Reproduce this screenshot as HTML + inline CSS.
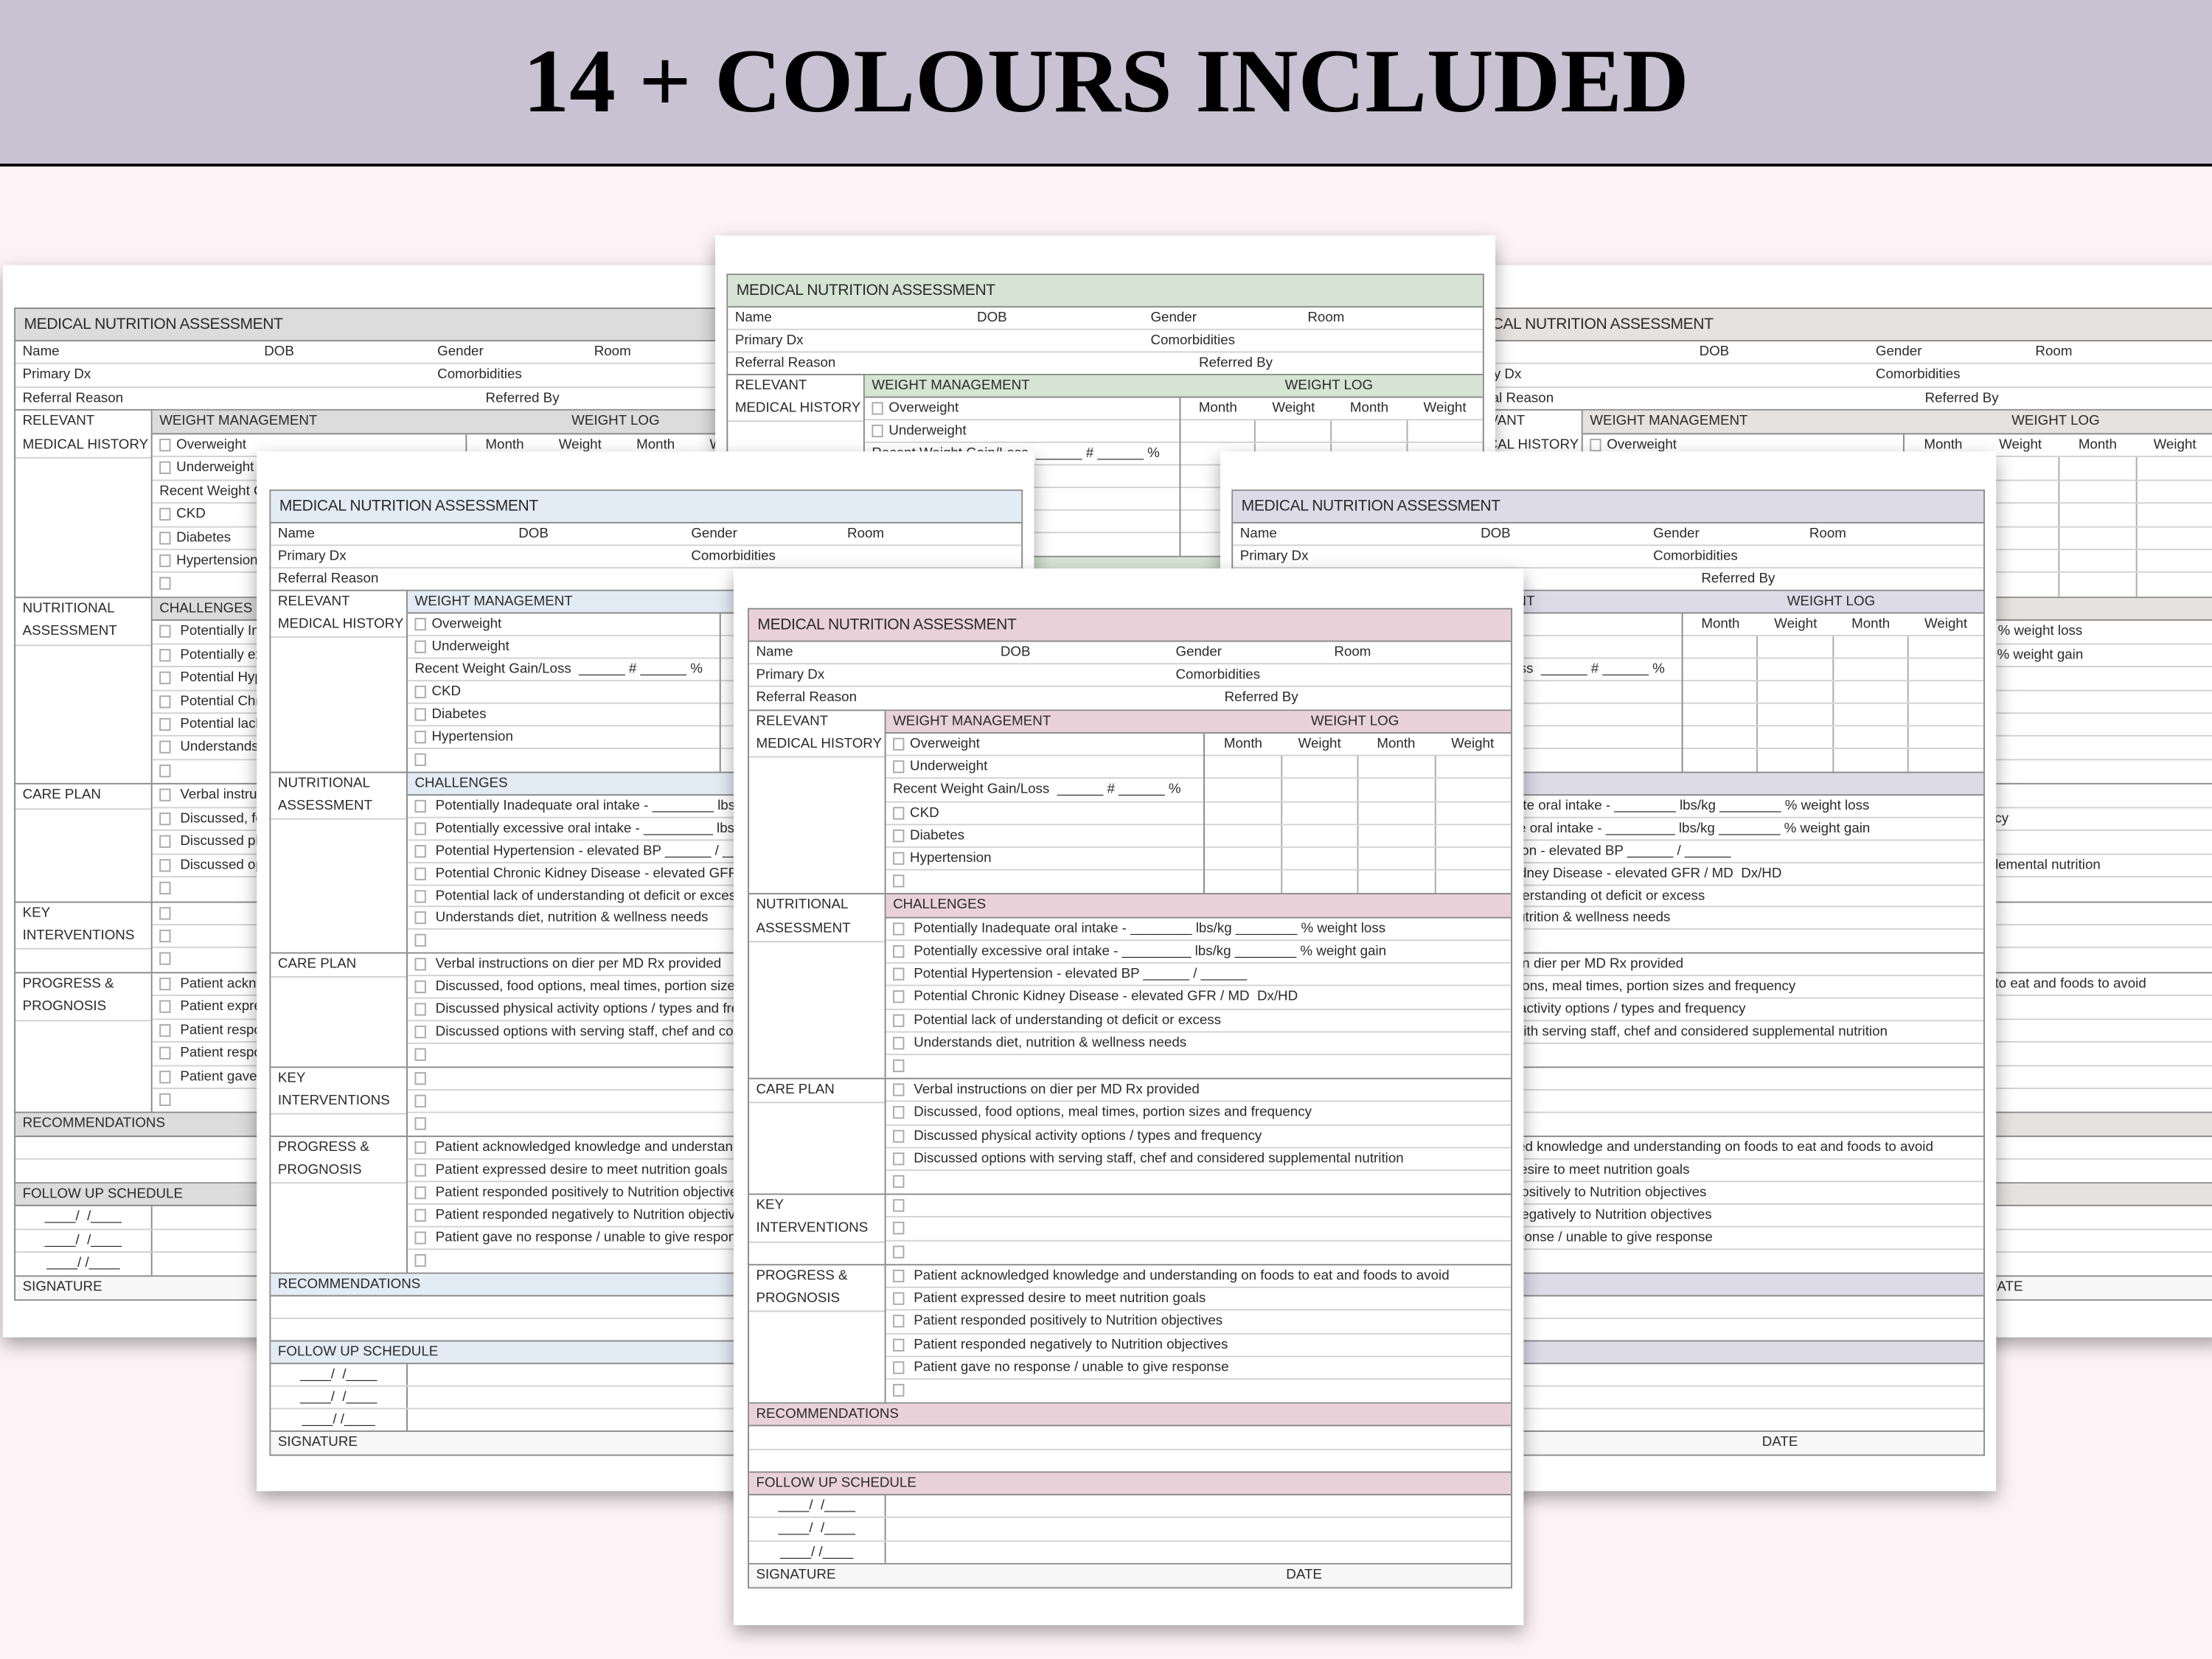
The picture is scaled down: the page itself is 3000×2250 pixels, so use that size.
<!DOCTYPE html>
<html><head><meta charset="utf-8">
<style>
*{margin:0;padding:0;box-sizing:border-box}
body{width:3000px;height:2250px;overflow:hidden;background:#fdf3f6;font-family:"Liberation Sans",sans-serif;position:relative}
#w{position:absolute;left:0;top:0;width:1568px;height:1176px;transform:scale(1.91327);transform-origin:0 0;overflow:hidden}
.top{position:absolute;left:0;top:0;width:1568px;height:117.5px;background:#c9c2d3;border-bottom:2.5px solid #000;z-index:10}
.tt{position:absolute;left:0;width:1568px;top:26px;text-align:center;font:bold 64px/64px "Liberation Serif",serif;color:#000;transform:scaleX(1.025);white-space:nowrap}
.pg{position:absolute;background:#fff;box-shadow:0 5px 12px rgba(0,0,0,.35);overflow:hidden}
.f{position:absolute;left:10px;top:28px;border:1px solid #8a8a8a;color:#2a2a2a;font-size:9.8px;background:#fff}
.hd{height:23px;background:var(--c);border-bottom:1px solid #8a8a8a;font-size:11px;line-height:23px;padding-left:6px;letter-spacing:-.2px;white-space:nowrap}
.r{position:relative;height:var(--rh);line-height:var(--rh);border-bottom:1px solid #d2d2d2;white-space:nowrap;overflow:hidden;padding-left:5px}
.r i{position:absolute;top:0;font-style:normal}
.c{background:var(--c);border-bottom-color:#8a8a8a}
.d{border-bottom-color:#8a8a8a}
.sec{display:flex;border-bottom:1px solid #8a8a8a}
.lc{width:97px;flex:none;border-right:1px solid #8a8a8a}
.lb{line-height:var(--rh);padding-left:5px;border-bottom:1px solid #cfcfcf;white-space:nowrap;overflow:hidden}
.rc{flex:1;min-width:0}
.rc>.r:last-child{border-bottom:none}
.wl{display:flex}
.lst{flex:1;min-width:0}
.lst .r:last-child,.log .r:last-child{border-bottom:none}
.log{width:49.2%;border-left:1px solid #8a8a8a}
.log .r{display:flex;padding:0}
.log .r span{flex:1;text-align:center}
.log .g span{border-left:1px solid #aaa}
.log .g span:first-child{border-left:none}
.cb{display:inline-block;width:8px;height:9px;border:1px solid #aaa;vertical-align:-2px;margin-right:4px}
.fu{display:flex;padding:0}
.fu span:first-child{width:97px;border-right:1px solid #8a8a8a;text-align:center}
.sg{background:#f7f7f7;border-bottom:none}
</style></head><body><div id="w">
<div class="top"><div class="tt">14 + COLOURS INCLUDED</div></div>

<!-- LEFT BACK -->
<div class="pg" style="left:2px;top:188px;width:556px;height:760px;z-index:1">
<div class="f" style="--c:#dcdcdc;--rh:16.45px;width:536px;top:30px;left:8px">
<div class="hd">MEDICAL NUTRITION ASSESSMENT</div>
<div class="r"><i style="left:5px">Name</i><i style="left:33%">DOB</i><i style="left:56%">Gender</i><i style="left:76.8%">Room</i></div>
<div class="r"><i style="left:5px">Primary Dx</i><i style="left:56%">Comorbidities</i></div>
<div class="r d"><i style="left:5px">Referral Reason</i><i style="left:62.4%">Referred By</i></div>
<div class="sec"><div class="lc"><div class="lb">RELEVANT<br>MEDICAL HISTORY</div></div><div class="rc">
<div class="r c"><i style="left:5px">WEIGHT MANAGEMENT</i><i style="left:68%">WEIGHT LOG</i></div>
<div class="wl"><div class="lst">
<div class="r"><b class="cb"></b>Overweight</div><div class="r"><b class="cb"></b>Underweight</div><div class="r">Recent Weight Gain/Loss &nbsp;______ # ______ %</div><div class="r"><b class="cb"></b>CKD</div><div class="r"><b class="cb"></b>Diabetes</div><div class="r"><b class="cb"></b>Hypertension</div><div class="r"><b class="cb"></b></div>
</div><div class="log">
<div class="r"><span>Month</span><span>Weight</span><span>Month</span><span>Weight</span></div>
<div class="r g"><span></span><span></span><span></span><span></span></div><div class="r g"><span></span><span></span><span></span><span></span></div><div class="r g"><span></span><span></span><span></span><span></span></div><div class="r g"><span></span><span></span><span></span><span></span></div><div class="r g"><span></span><span></span><span></span><span></span></div><div class="r g"><span></span><span></span><span></span><span></span></div>
</div></div></div></div>
<div class="sec"><div class="lc"><div class="lb">NUTRITIONAL<br>ASSESSMENT</div></div><div class="rc">
<div class="r c">CHALLENGES</div>
<div class="r"><b class="cb"></b> Potentially Inadequate oral intake - ________ lbs/kg ________ % weight loss</div>
<div class="r"><b class="cb"></b> Potentially excessive oral intake - _________ lbs/kg ________ % weight gain</div>
<div class="r"><b class="cb"></b> Potential Hypertension - elevated BP ______ / ______</div>
<div class="r"><b class="cb"></b> Potential Chronic Kidney Disease - elevated GFR / MD &nbsp;Dx/HD</div>
<div class="r"><b class="cb"></b> Potential lack of understanding ot deficit or excess</div>
<div class="r"><b class="cb"></b> Understands diet, nutrition &amp; wellness needs</div>
<div class="r"><b class="cb"></b></div>
</div></div>
<div class="sec"><div class="lc"><div class="lb">CARE PLAN</div></div><div class="rc">
<div class="r"><b class="cb"></b> Verbal instructions on dier per MD Rx provided</div>
<div class="r"><b class="cb"></b> Discussed, food options, meal times, portion sizes and frequency</div>
<div class="r"><b class="cb"></b> Discussed physical activity options / types and frequency</div>
<div class="r"><b class="cb"></b> Discussed options with serving staff, chef and considered supplemental nutrition</div>
<div class="r"><b class="cb"></b></div>
</div></div>
<div class="sec"><div class="lc"><div class="lb">KEY<br>INTERVENTIONS</div></div><div class="rc">
<div class="r"><b class="cb"></b></div><div class="r"><b class="cb"></b></div><div class="r"><b class="cb"></b></div>
</div></div>
<div class="sec"><div class="lc"><div class="lb">PROGRESS &amp;<br>PROGNOSIS</div></div><div class="rc">
<div class="r"><b class="cb"></b> Patient acknowledged knowledge and understanding on foods to eat and foods to avoid</div>
<div class="r"><b class="cb"></b> Patient expressed desire to meet nutrition goals</div>
<div class="r"><b class="cb"></b> Patient responded positively to Nutrition objectives</div>
<div class="r"><b class="cb"></b> Patient responded negatively to Nutrition objectives</div>
<div class="r"><b class="cb"></b> Patient gave no response / unable to give response</div>
<div class="r"><b class="cb"></b></div>
</div></div>
<div class="r c">RECOMMENDATIONS</div><div class="r"></div><div class="r d"></div>
<div class="r c">FOLLOW UP SCHEDULE</div>
<div class="r fu"><span>____/&nbsp;&nbsp;/____</span><span></span></div><div class="r fu"><span>____/&nbsp;&nbsp;/____</span><span></span></div><div class="r fu d"><span>____/ /____</span><span></span></div>
<div class="r sg"><i style="left:5px">SIGNATURE</i><i style="left:70.5%">DATE</i></div>
</div></div>

<!-- RIGHT BACK -->
<div class="pg" style="left:1016px;top:188px;width:560px;height:760px;z-index:1">
<div class="f" style="--c:#e6e2e0;--rh:16.45px;width:546px;top:30px;left:8px">
<div class="hd">MEDICAL NUTRITION ASSESSMENT</div>
<div class="r"><i style="left:5px">Name</i><i style="left:33%">DOB</i><i style="left:56%">Gender</i><i style="left:76.8%">Room</i></div>
<div class="r"><i style="left:5px">Primary Dx</i><i style="left:56%">Comorbidities</i></div>
<div class="r d"><i style="left:5px">Referral Reason</i><i style="left:62.4%">Referred By</i></div>
<div class="sec"><div class="lc"><div class="lb">RELEVANT<br>MEDICAL HISTORY</div></div><div class="rc">
<div class="r c"><i style="left:5px">WEIGHT MANAGEMENT</i><i style="left:68%">WEIGHT LOG</i></div>
<div class="wl"><div class="lst">
<div class="r"><b class="cb"></b>Overweight</div><div class="r"><b class="cb"></b>Underweight</div><div class="r">Recent Weight Gain/Loss &nbsp;______ # ______ %</div><div class="r"><b class="cb"></b>CKD</div><div class="r"><b class="cb"></b>Diabetes</div><div class="r"><b class="cb"></b>Hypertension</div><div class="r"><b class="cb"></b></div>
</div><div class="log">
<div class="r"><span>Month</span><span>Weight</span><span>Month</span><span>Weight</span></div>
<div class="r g"><span></span><span></span><span></span><span></span></div><div class="r g"><span></span><span></span><span></span><span></span></div><div class="r g"><span></span><span></span><span></span><span></span></div><div class="r g"><span></span><span></span><span></span><span></span></div><div class="r g"><span></span><span></span><span></span><span></span></div><div class="r g"><span></span><span></span><span></span><span></span></div>
</div></div></div></div>
<div class="sec"><div class="lc"><div class="lb">NUTRITIONAL<br>ASSESSMENT</div></div><div class="rc">
<div class="r c">CHALLENGES</div>
<div class="r"><b class="cb"></b> Potentially Inadequate oral intake - ________ lbs/kg ________ % weight loss</div>
<div class="r"><b class="cb"></b> Potentially excessive oral intake - _________ lbs/kg ________ % weight gain</div>
<div class="r"><b class="cb"></b> Potential Hypertension - elevated BP ______ / ______</div>
<div class="r"><b class="cb"></b> Potential Chronic Kidney Disease - elevated GFR / MD &nbsp;Dx/HD</div>
<div class="r"><b class="cb"></b> Potential lack of understanding ot deficit or excess</div>
<div class="r"><b class="cb"></b> Understands diet, nutrition &amp; wellness needs</div>
<div class="r"><b class="cb"></b></div>
</div></div>
<div class="sec"><div class="lc"><div class="lb">CARE PLAN</div></div><div class="rc">
<div class="r"><b class="cb"></b> Verbal instructions on dier per MD Rx provided</div>
<div class="r"><b class="cb"></b> Discussed, food options, meal times, portion sizes and frequency</div>
<div class="r"><b class="cb"></b> Discussed physical activity options / types and frequency</div>
<div class="r"><b class="cb"></b> Discussed options with serving staff, chef and considered supplemental nutrition</div>
<div class="r"><b class="cb"></b></div>
</div></div>
<div class="sec"><div class="lc"><div class="lb">KEY<br>INTERVENTIONS</div></div><div class="rc">
<div class="r"><b class="cb"></b></div><div class="r"><b class="cb"></b></div><div class="r"><b class="cb"></b></div>
</div></div>
<div class="sec"><div class="lc"><div class="lb">PROGRESS &amp;<br>PROGNOSIS</div></div><div class="rc">
<div class="r"><b class="cb"></b> Patient acknowledged knowledge and understanding on foods to eat and foods to avoid</div>
<div class="r"><b class="cb"></b> Patient expressed desire to meet nutrition goals</div>
<div class="r"><b class="cb"></b> Patient responded positively to Nutrition objectives</div>
<div class="r"><b class="cb"></b> Patient responded negatively to Nutrition objectives</div>
<div class="r"><b class="cb"></b> Patient gave no response / unable to give response</div>
<div class="r"><b class="cb"></b></div>
</div></div>
<div class="r c">RECOMMENDATIONS</div><div class="r"></div><div class="r d"></div>
<div class="r c">FOLLOW UP SCHEDULE</div>
<div class="r fu"><span>____/&nbsp;&nbsp;/____</span><span></span></div><div class="r fu"><span>____/&nbsp;&nbsp;/____</span><span></span></div><div class="r fu d"><span>____/ /____</span><span></span></div>
<div class="r sg"><i style="left:5px">SIGNATURE</i><i style="left:70.5%">DATE</i></div>
</div></div>

<!-- TOP CENTER (green) -->
<div class="pg" style="left:507px;top:167px;width:553px;height:750px;z-index:2">
<div class="f" style="--c:#d6e4d4;--rh:15.97px;width:537px;top:27px;left:8px">
<div class="hd">MEDICAL NUTRITION ASSESSMENT</div>
<div class="r"><i style="left:5px">Name</i><i style="left:33%">DOB</i><i style="left:56%">Gender</i><i style="left:76.8%">Room</i></div>
<div class="r"><i style="left:5px">Primary Dx</i><i style="left:56%">Comorbidities</i></div>
<div class="r d"><i style="left:5px">Referral Reason</i><i style="left:62.4%">Referred By</i></div>
<div class="sec"><div class="lc"><div class="lb">RELEVANT<br>MEDICAL HISTORY</div></div><div class="rc">
<div class="r c"><i style="left:5px">WEIGHT MANAGEMENT</i><i style="left:68%">WEIGHT LOG</i></div>
<div class="wl"><div class="lst">
<div class="r"><b class="cb"></b>Overweight</div><div class="r"><b class="cb"></b>Underweight</div><div class="r">Recent Weight Gain/Loss &nbsp;______ # ______ %</div><div class="r"><b class="cb"></b>CKD</div><div class="r"><b class="cb"></b>Diabetes</div><div class="r"><b class="cb"></b>Hypertension</div><div class="r"><b class="cb"></b></div>
</div><div class="log">
<div class="r"><span>Month</span><span>Weight</span><span>Month</span><span>Weight</span></div>
<div class="r g"><span></span><span></span><span></span><span></span></div><div class="r g"><span></span><span></span><span></span><span></span></div><div class="r g"><span></span><span></span><span></span><span></span></div><div class="r g"><span></span><span></span><span></span><span></span></div><div class="r g"><span></span><span></span><span></span><span></span></div><div class="r g"><span></span><span></span><span></span><span></span></div>
</div></div></div></div>
<div class="sec"><div class="lc"><div class="lb">NUTRITIONAL<br>ASSESSMENT</div></div><div class="rc">
<div class="r c">CHALLENGES</div>
<div class="r"><b class="cb"></b> Potentially Inadequate oral intake - ________ lbs/kg ________ % weight loss</div>
<div class="r"><b class="cb"></b> Potentially excessive oral intake - _________ lbs/kg ________ % weight gain</div>
<div class="r"><b class="cb"></b> Potential Hypertension - elevated BP ______ / ______</div>
<div class="r"><b class="cb"></b> Potential Chronic Kidney Disease - elevated GFR / MD &nbsp;Dx/HD</div>
<div class="r"><b class="cb"></b> Potential lack of understanding ot deficit or excess</div>
<div class="r"><b class="cb"></b> Understands diet, nutrition &amp; wellness needs</div>
<div class="r"><b class="cb"></b></div>
</div></div>
</div></div>

<!-- MID LEFT (blue) -->
<div class="pg" style="left:182px;top:320px;width:551px;height:737px;z-index:3">
<div class="f" style="--c:#e3ebf4;--rh:15.97px;width:534px;top:27px;left:9px">
<div class="hd">MEDICAL NUTRITION ASSESSMENT</div>
<div class="r"><i style="left:5px">Name</i><i style="left:33%">DOB</i><i style="left:56%">Gender</i><i style="left:76.8%">Room</i></div>
<div class="r"><i style="left:5px">Primary Dx</i><i style="left:56%">Comorbidities</i></div>
<div class="r d"><i style="left:5px">Referral Reason</i><i style="left:62.4%">Referred By</i></div>
<div class="sec"><div class="lc"><div class="lb">RELEVANT<br>MEDICAL HISTORY</div></div><div class="rc">
<div class="r c"><i style="left:5px">WEIGHT MANAGEMENT</i><i style="left:68%">WEIGHT LOG</i></div>
<div class="wl"><div class="lst">
<div class="r"><b class="cb"></b>Overweight</div><div class="r"><b class="cb"></b>Underweight</div><div class="r">Recent Weight Gain/Loss &nbsp;______ # ______ %</div><div class="r"><b class="cb"></b>CKD</div><div class="r"><b class="cb"></b>Diabetes</div><div class="r"><b class="cb"></b>Hypertension</div><div class="r"><b class="cb"></b></div>
</div><div class="log">
<div class="r"><span>Month</span><span>Weight</span><span>Month</span><span>Weight</span></div>
<div class="r g"><span></span><span></span><span></span><span></span></div><div class="r g"><span></span><span></span><span></span><span></span></div><div class="r g"><span></span><span></span><span></span><span></span></div><div class="r g"><span></span><span></span><span></span><span></span></div><div class="r g"><span></span><span></span><span></span><span></span></div><div class="r g"><span></span><span></span><span></span><span></span></div>
</div></div></div></div>
<div class="sec"><div class="lc"><div class="lb">NUTRITIONAL<br>ASSESSMENT</div></div><div class="rc">
<div class="r c">CHALLENGES</div>
<div class="r"><b class="cb"></b> Potentially Inadequate oral intake - ________ lbs/kg ________ % weight loss</div>
<div class="r"><b class="cb"></b> Potentially excessive oral intake - _________ lbs/kg ________ % weight gain</div>
<div class="r"><b class="cb"></b> Potential Hypertension - elevated BP ______ / ______</div>
<div class="r"><b class="cb"></b> Potential Chronic Kidney Disease - elevated GFR / MD &nbsp;Dx/HD</div>
<div class="r"><b class="cb"></b> Potential lack of understanding ot deficit or excess</div>
<div class="r"><b class="cb"></b> Understands diet, nutrition &amp; wellness needs</div>
<div class="r"><b class="cb"></b></div>
</div></div>
<div class="sec"><div class="lc"><div class="lb">CARE PLAN</div></div><div class="rc">
<div class="r"><b class="cb"></b> Verbal instructions on dier per MD Rx provided</div>
<div class="r"><b class="cb"></b> Discussed, food options, meal times, portion sizes and frequency</div>
<div class="r"><b class="cb"></b> Discussed physical activity options / types and frequency</div>
<div class="r"><b class="cb"></b> Discussed options with serving staff, chef and considered supplemental nutrition</div>
<div class="r"><b class="cb"></b></div>
</div></div>
<div class="sec"><div class="lc"><div class="lb">KEY<br>INTERVENTIONS</div></div><div class="rc">
<div class="r"><b class="cb"></b></div><div class="r"><b class="cb"></b></div><div class="r"><b class="cb"></b></div>
</div></div>
<div class="sec"><div class="lc"><div class="lb">PROGRESS &amp;<br>PROGNOSIS</div></div><div class="rc">
<div class="r"><b class="cb"></b> Patient acknowledged knowledge and understanding on foods to eat and foods to avoid</div>
<div class="r"><b class="cb"></b> Patient expressed desire to meet nutrition goals</div>
<div class="r"><b class="cb"></b> Patient responded positively to Nutrition objectives</div>
<div class="r"><b class="cb"></b> Patient responded negatively to Nutrition objectives</div>
<div class="r"><b class="cb"></b> Patient gave no response / unable to give response</div>
<div class="r"><b class="cb"></b></div>
</div></div>
<div class="r c">RECOMMENDATIONS</div><div class="r"></div><div class="r d"></div>
<div class="r c">FOLLOW UP SCHEDULE</div>
<div class="r fu"><span>____/&nbsp;&nbsp;/____</span><span></span></div><div class="r fu"><span>____/&nbsp;&nbsp;/____</span><span></span></div><div class="r fu d"><span>____/ /____</span><span></span></div>
<div class="r sg"><i style="left:5px">SIGNATURE</i><i style="left:70.5%">DATE</i></div>
</div></div>

<!-- MID RIGHT (purple) -->
<div class="pg" style="left:865px;top:320px;width:550px;height:737px;z-index:3">
<div class="f" style="--c:#dddbe8;--rh:15.97px;width:534px;top:27px;left:8px">
<div class="hd">MEDICAL NUTRITION ASSESSMENT</div>
<div class="r"><i style="left:5px">Name</i><i style="left:33%">DOB</i><i style="left:56%">Gender</i><i style="left:76.8%">Room</i></div>
<div class="r"><i style="left:5px">Primary Dx</i><i style="left:56%">Comorbidities</i></div>
<div class="r d"><i style="left:5px">Referral Reason</i><i style="left:62.4%">Referred By</i></div>
<div class="sec"><div class="lc"><div class="lb">RELEVANT<br>MEDICAL HISTORY</div></div><div class="rc">
<div class="r c"><i style="left:5px">WEIGHT MANAGEMENT</i><i style="left:68%">WEIGHT LOG</i></div>
<div class="wl"><div class="lst">
<div class="r"><b class="cb"></b>Overweight</div><div class="r"><b class="cb"></b>Underweight</div><div class="r">Recent Weight Gain/Loss &nbsp;______ # ______ %</div><div class="r"><b class="cb"></b>CKD</div><div class="r"><b class="cb"></b>Diabetes</div><div class="r"><b class="cb"></b>Hypertension</div><div class="r"><b class="cb"></b></div>
</div><div class="log">
<div class="r"><span>Month</span><span>Weight</span><span>Month</span><span>Weight</span></div>
<div class="r g"><span></span><span></span><span></span><span></span></div><div class="r g"><span></span><span></span><span></span><span></span></div><div class="r g"><span></span><span></span><span></span><span></span></div><div class="r g"><span></span><span></span><span></span><span></span></div><div class="r g"><span></span><span></span><span></span><span></span></div><div class="r g"><span></span><span></span><span></span><span></span></div>
</div></div></div></div>
<div class="sec"><div class="lc"><div class="lb">NUTRITIONAL<br>ASSESSMENT</div></div><div class="rc">
<div class="r c">CHALLENGES</div>
<div class="r"><b class="cb"></b> Potentially Inadequate oral intake - ________ lbs/kg ________ % weight loss</div>
<div class="r"><b class="cb"></b> Potentially excessive oral intake - _________ lbs/kg ________ % weight gain</div>
<div class="r"><b class="cb"></b> Potential Hypertension - elevated BP ______ / ______</div>
<div class="r"><b class="cb"></b> Potential Chronic Kidney Disease - elevated GFR / MD &nbsp;Dx/HD</div>
<div class="r"><b class="cb"></b> Potential lack of understanding ot deficit or excess</div>
<div class="r"><b class="cb"></b> Understands diet, nutrition &amp; wellness needs</div>
<div class="r"><b class="cb"></b></div>
</div></div>
<div class="sec"><div class="lc"><div class="lb">CARE PLAN</div></div><div class="rc">
<div class="r"><b class="cb"></b> Verbal instructions on dier per MD Rx provided</div>
<div class="r"><b class="cb"></b> Discussed, food options, meal times, portion sizes and frequency</div>
<div class="r"><b class="cb"></b> Discussed physical activity options / types and frequency</div>
<div class="r"><b class="cb"></b> Discussed options with serving staff, chef and considered supplemental nutrition</div>
<div class="r"><b class="cb"></b></div>
</div></div>
<div class="sec"><div class="lc"><div class="lb">KEY<br>INTERVENTIONS</div></div><div class="rc">
<div class="r"><b class="cb"></b></div><div class="r"><b class="cb"></b></div><div class="r"><b class="cb"></b></div>
</div></div>
<div class="sec"><div class="lc"><div class="lb">PROGRESS &amp;<br>PROGNOSIS</div></div><div class="rc">
<div class="r"><b class="cb"></b> Patient acknowledged knowledge and understanding on foods to eat and foods to avoid</div>
<div class="r"><b class="cb"></b> Patient expressed desire to meet nutrition goals</div>
<div class="r"><b class="cb"></b> Patient responded positively to Nutrition objectives</div>
<div class="r"><b class="cb"></b> Patient responded negatively to Nutrition objectives</div>
<div class="r"><b class="cb"></b> Patient gave no response / unable to give response</div>
<div class="r"><b class="cb"></b></div>
</div></div>
<div class="r c">RECOMMENDATIONS</div><div class="r"></div><div class="r d"></div>
<div class="r c">FOLLOW UP SCHEDULE</div>
<div class="r fu"><span>____/&nbsp;&nbsp;/____</span><span></span></div><div class="r fu"><span>____/&nbsp;&nbsp;/____</span><span></span></div><div class="r fu d"><span>____/ /____</span><span></span></div>
<div class="r sg"><i style="left:5px">SIGNATURE</i><i style="left:70.5%">DATE</i></div>
</div></div>

<!-- FRONT (pink) -->
<div class="pg" style="left:520px;top:403px;width:560px;height:749px;z-index:4">
<div class="f" style="--c:#e9d1da;--rh:16.22px;width:542px;top:28px;left:10px">
<div class="hd">MEDICAL NUTRITION ASSESSMENT</div>
<div class="r"><i style="left:5px">Name</i><i style="left:33%">DOB</i><i style="left:56%">Gender</i><i style="left:76.8%">Room</i></div>
<div class="r"><i style="left:5px">Primary Dx</i><i style="left:56%">Comorbidities</i></div>
<div class="r d"><i style="left:5px">Referral Reason</i><i style="left:62.4%">Referred By</i></div>
<div class="sec"><div class="lc"><div class="lb">RELEVANT<br>MEDICAL HISTORY</div></div><div class="rc">
<div class="r c"><i style="left:5px">WEIGHT MANAGEMENT</i><i style="left:68%">WEIGHT LOG</i></div>
<div class="wl"><div class="lst">
<div class="r"><b class="cb"></b>Overweight</div><div class="r"><b class="cb"></b>Underweight</div><div class="r">Recent Weight Gain/Loss &nbsp;______ # ______ %</div><div class="r"><b class="cb"></b>CKD</div><div class="r"><b class="cb"></b>Diabetes</div><div class="r"><b class="cb"></b>Hypertension</div><div class="r"><b class="cb"></b></div>
</div><div class="log">
<div class="r"><span>Month</span><span>Weight</span><span>Month</span><span>Weight</span></div>
<div class="r g"><span></span><span></span><span></span><span></span></div><div class="r g"><span></span><span></span><span></span><span></span></div><div class="r g"><span></span><span></span><span></span><span></span></div><div class="r g"><span></span><span></span><span></span><span></span></div><div class="r g"><span></span><span></span><span></span><span></span></div><div class="r g"><span></span><span></span><span></span><span></span></div>
</div></div></div></div>
<div class="sec"><div class="lc"><div class="lb">NUTRITIONAL<br>ASSESSMENT</div></div><div class="rc">
<div class="r c">CHALLENGES</div>
<div class="r"><b class="cb"></b> Potentially Inadequate oral intake - ________ lbs/kg ________ % weight loss</div>
<div class="r"><b class="cb"></b> Potentially excessive oral intake - _________ lbs/kg ________ % weight gain</div>
<div class="r"><b class="cb"></b> Potential Hypertension - elevated BP ______ / ______</div>
<div class="r"><b class="cb"></b> Potential Chronic Kidney Disease - elevated GFR / MD &nbsp;Dx/HD</div>
<div class="r"><b class="cb"></b> Potential lack of understanding ot deficit or excess</div>
<div class="r"><b class="cb"></b> Understands diet, nutrition &amp; wellness needs</div>
<div class="r"><b class="cb"></b></div>
</div></div>
<div class="sec"><div class="lc"><div class="lb">CARE PLAN</div></div><div class="rc">
<div class="r"><b class="cb"></b> Verbal instructions on dier per MD Rx provided</div>
<div class="r"><b class="cb"></b> Discussed, food options, meal times, portion sizes and frequency</div>
<div class="r"><b class="cb"></b> Discussed physical activity options / types and frequency</div>
<div class="r"><b class="cb"></b> Discussed options with serving staff, chef and considered supplemental nutrition</div>
<div class="r"><b class="cb"></b></div>
</div></div>
<div class="sec"><div class="lc"><div class="lb">KEY<br>INTERVENTIONS</div></div><div class="rc">
<div class="r"><b class="cb"></b></div><div class="r"><b class="cb"></b></div><div class="r"><b class="cb"></b></div>
</div></div>
<div class="sec"><div class="lc"><div class="lb">PROGRESS &amp;<br>PROGNOSIS</div></div><div class="rc">
<div class="r"><b class="cb"></b> Patient acknowledged knowledge and understanding on foods to eat and foods to avoid</div>
<div class="r"><b class="cb"></b> Patient expressed desire to meet nutrition goals</div>
<div class="r"><b class="cb"></b> Patient responded positively to Nutrition objectives</div>
<div class="r"><b class="cb"></b> Patient responded negatively to Nutrition objectives</div>
<div class="r"><b class="cb"></b> Patient gave no response / unable to give response</div>
<div class="r"><b class="cb"></b></div>
</div></div>
<div class="r c">RECOMMENDATIONS</div><div class="r"></div><div class="r d"></div>
<div class="r c">FOLLOW UP SCHEDULE</div>
<div class="r fu"><span>____/&nbsp;&nbsp;/____</span><span></span></div><div class="r fu"><span>____/&nbsp;&nbsp;/____</span><span></span></div><div class="r fu d"><span>____/ /____</span><span></span></div>
<div class="r sg"><i style="left:5px">SIGNATURE</i><i style="left:70.5%">DATE</i></div>
</div></div>

</div></body></html>
